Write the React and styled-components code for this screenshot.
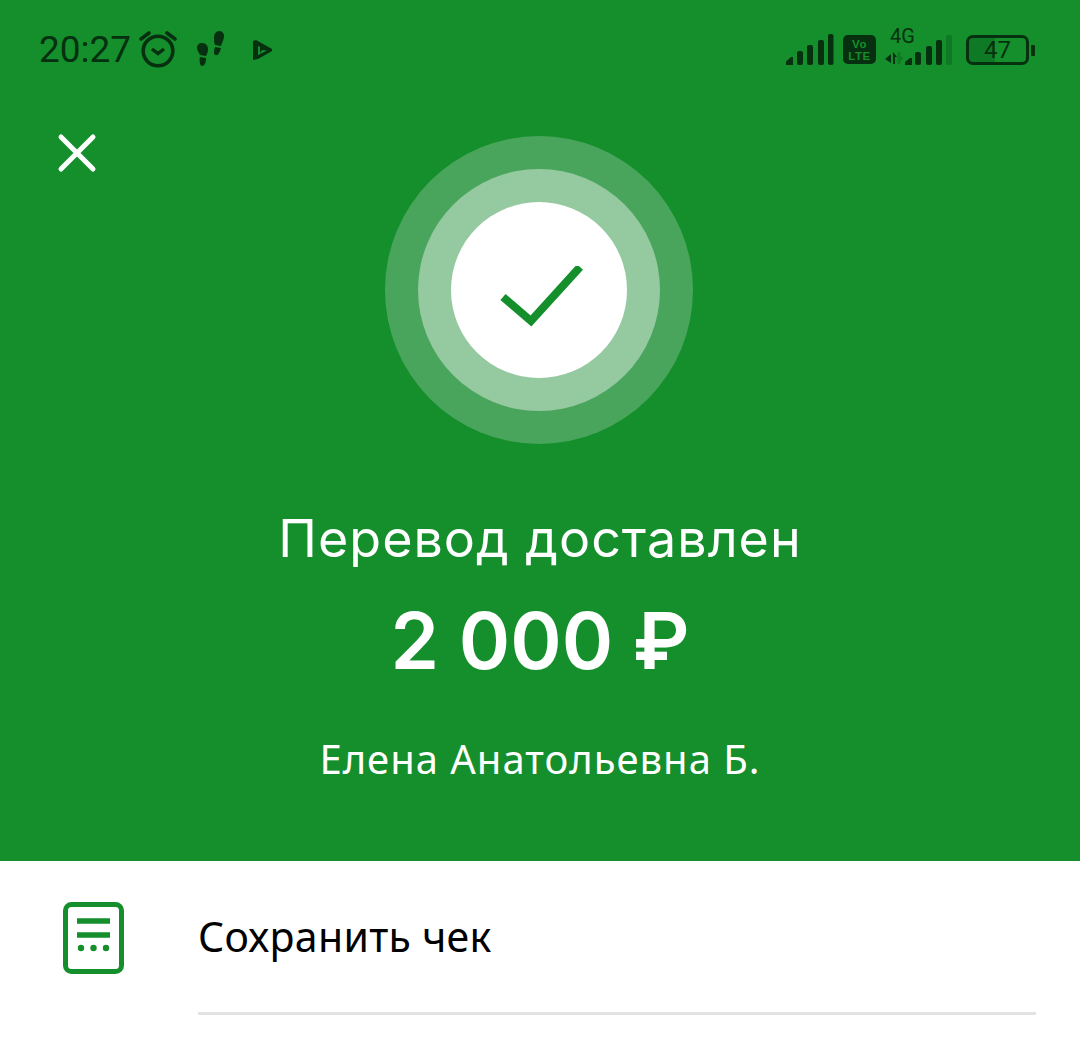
import React from "react";
import styled, { createGlobalStyle } from "styled-components";

const Global = createGlobalStyle`
  html, body { margin: 0; padding: 0; background: #fff; }
  body { font-family: "Noto Sans", "Open Sans", sans-serif; }
`;
const Page = styled.div`
  width: 1080px; height: 1045px; overflow: hidden; background: #fff;
  display: flex; flex-direction: column;
`;
const Header = styled.header`
  height: 861px; background: #148f2c; display: flex; flex-direction: column; flex: none;
`;
const StatusBar = styled.div`
  height: 98px; flex: none; display: flex; align-items: center; justify-content: space-between;
  padding: 2px 45px 0 39px; color: #06300f; box-sizing: border-box;
`;
const StatusGroup = styled.div`display: flex; align-items: center;`;
const Time = styled.span`
  font-family: Roboto, sans-serif; font-size: 37px; line-height: 40px; color: #06300f; width: 99px; flex: none;
`;
const Hero = styled.div`
  display: grid; grid-template-columns: 1fr 308px 1fr; padding-top: 38px; margin-left: -2px;
`;
const CloseButton = styled.button`
  all: unset; width: 40px; height: 40px; margin: -3px 0 0 59px; display: block; color: #fff;
`;
const Ring = styled.div`
  width: ${p => p.$size}px; height: ${p => p.$size}px; border-radius: 50%;
  background: ${p => p.$bg}; display: flex; align-items: center; justify-content: center;
`;
const CheckMark = styled.svg`display: block; flex: none; margin: 16px 0 0 5px;`;
const Title = styled.div`
  margin-top: 61px; text-align: center; color: #fff; font-family: Inter, sans-serif; font-size: 52px; line-height: 68px; letter-spacing: 1px;
`;
const Amount = styled.div`
  margin-top: 26px; text-align: center; color: #fff; font-family: Inter, sans-serif; font-size: 78px; line-height: 84px; font-weight: 600;
`;
const Recipient = styled.div`
  margin-top: 51px; text-align: center; color: #fff; font-size: 40px; line-height: 50px; letter-spacing: 1px;
`;
const ActionRow = styled.div`
  display: grid; grid-template-columns: 198px 1fr; padding-right: 44px; flex: 1;
`;
const ActionIcon = styled.div`padding: 41px 0 0 63px;`;
const ActionBody = styled.div`
  height: 151px; border-bottom: 3px solid #e2e3e5; display: flex; align-items: center;
  font-size: 41px; letter-spacing: 0.3px; color: #000;
`;
const ActionLabel = styled.span`margin-top: -2px;`;
const Svg = styled.svg`display: block; flex: none; margin-left: ${p => p.$ml || 0}px;`;
const BatteryShell = styled.div`
  width: 57px; height: 24px; border: 3px solid #06300f; border-radius: 7px;
  display: flex; align-items: center; justify-content: center;
  font-family: Roboto, sans-serif; font-size: 24px; color: #06300f;
  background: linear-gradient(90deg, #0f7a25 0 45%, transparent 45%);
  margin-left: 13px; box-sizing: content-box;
`;
const BatteryTip = styled.span`
  width: 4px; height: 11px; border-radius: 1px; background: #06300f; margin-left: 2px; display: block;
`;
const VoLte = styled.div`
  width: 33px; height: 29px; border-radius: 5px; background: #06300f; color: #148f2c; margin: -1px 0 0 9px;
  display: flex; flex-direction: column; align-items: center; justify-content: center;
  font-family: "Liberation Sans", sans-serif; font-weight: 700; font-size: 11.5px; line-height: 12px; letter-spacing: 0.6px;
`;
const NetStack = styled.div`
  margin-left: 9px; width: 68px; position: relative; height: 36px;
`;
const NetLabel = styled.span`
  position: absolute; left: 5px; top: -6px;
  font-family: Roboto, sans-serif; font-size: 20px; line-height: 20px; color: #06300f;
`;

export default function App() {
  return (
    <Page>
      <Global />
      <Header>
        <StatusBar>
          <StatusGroup>
            <Time>20:27</Time>
            <Svg $ml={1} width="40" height="40" viewBox="0 0 40 40" fill="none" stroke="#06300f">
              <circle cx="19" cy="21" r="14.8" strokeWidth="3.6" />
              <path d="M13 19l6 4.5 6-4.5" strokeWidth="3.4" />
              <path d="M2 9l8-6M36 9l-8-6" strokeWidth="3.6" strokeLinecap="round" />
            </Svg>
            <Svg $ml={17} width="30" height="38" viewBox="0 0 30 38" fill="#06300f">
              <path d="M6 12c4 0 6 3 6 6 0 3-1 5-2 7l-6-1c-1-2-3-5-3-7 0-3 2-5 5-5z" />
              <path d="M4 26l6 1c0 4-1 8-4 8-2 0-3-5-2-9z" />
              <path d="M23 0c3 0 5 2 5 5s-2 7-3 10l-6-1c-1-2-1-5-1-7 0-4 2-7 5-7z" />
              <path d="M19 16l6 1c-1 4-3 8-5 7-3 0-2-5-1-8z" />
            </Svg>
            <Svg $ml={27} width="19" height="20" viewBox="0 0 19 20" fill="#06300f">
              <path fillRule="evenodd" d="M0 1l3-1 16 9v2L5 19l-5 1zM5 6v9l9-4.5-5-.5-2 3V7z" />
            </Svg>
          </StatusGroup>
          <StatusGroup>
            <Svg width="48" height="32" viewBox="0 0 48 32" fill="#06300f">
              <path d="M0 31v-3.500l5-4.500h2v8z" />
              <rect x="11" y="17" width="6" height="14" rx="2" />
              <rect x="21" y="11" width="6" height="20" rx="2" />
              <rect x="32" y="6" width="6" height="25" rx="2" />
              <rect x="42" y="0" width="5.500" height="31" rx="2" />
            </Svg>
            <VoLte><span>Vo</span><span>LTE</span></VoLte>
            <NetStack>
              <NetLabel>4G</NetLabel>
              <Svg width="68" height="36" viewBox="0 0 68 36" fill="#06300f">
                <path d="M0 27l6-5v9zM8 20l4 5h-2v7H8z" />
                <path d="M12.500 20h3v4l3 2-3 3v3h-3z" fill="#0f7a25" />
                <path d="M20 33v-3l5-4h2v7z" />
                <rect x="30" y="20" width="6" height="13" rx="2" />
                <rect x="41" y="14" width="6" height="19" rx="2" />
                <rect x="51" y="8" width="6" height="25" rx="2" />
                <rect x="61" y="3" width="6" height="30" rx="2" fill="#0f7a25" />
              </Svg>
            </NetStack>
            <BatteryShell>47</BatteryShell>
            <BatteryTip />
          </StatusGroup>
        </StatusBar>
        <Hero>
          <CloseButton aria-label="Закрыть">
            <Svg width="40" height="40" viewBox="0 0 40 40" stroke="#fff" strokeWidth="5" strokeLinecap="round">
              <path d="M4 4l32 32M36 4L4 36" />
            </Svg>
          </CloseButton>
          <Ring $size={308} $bg="#49a55c">
            <Ring $size={242} $bg="#95caa0">
              <Ring $size={176} $bg="#fff">
                <CheckMark width="84" height="64" viewBox="0 0 84 64" fill="none" stroke="#148f2c" strokeWidth="8">
                  <path d="M3 31l28 24 49-54" />
                </CheckMark>
              </Ring>
            </Ring>
          </Ring>
          <span />
        </Hero>
        <Title>Перевод доставлен</Title>
        <Amount>2 000 ₽</Amount>
        <Recipient>Елена Анатольевна Б.</Recipient>
      </Header>
      <ActionRow>
        <ActionIcon>
          <Svg width="61" height="72" viewBox="0 0 61 72" fill="none">
            <rect x="2.500" y="2.500" width="56" height="67" rx="6" stroke="#148f2c" strokeWidth="5" />
            <path d="M14 19h33M14 33h33" stroke="#148f2c" strokeWidth="5.400" />
            <circle cx="18" cy="46" r="3.200" fill="#148f2c" />
            <circle cx="30.500" cy="46" r="3.200" fill="#148f2c" />
            <circle cx="43" cy="46" r="3.200" fill="#148f2c" />
          </Svg>
        </ActionIcon>
        <ActionBody><ActionLabel>Сохранить чек</ActionLabel></ActionBody>
      </ActionRow>
    </Page>
  );
}
